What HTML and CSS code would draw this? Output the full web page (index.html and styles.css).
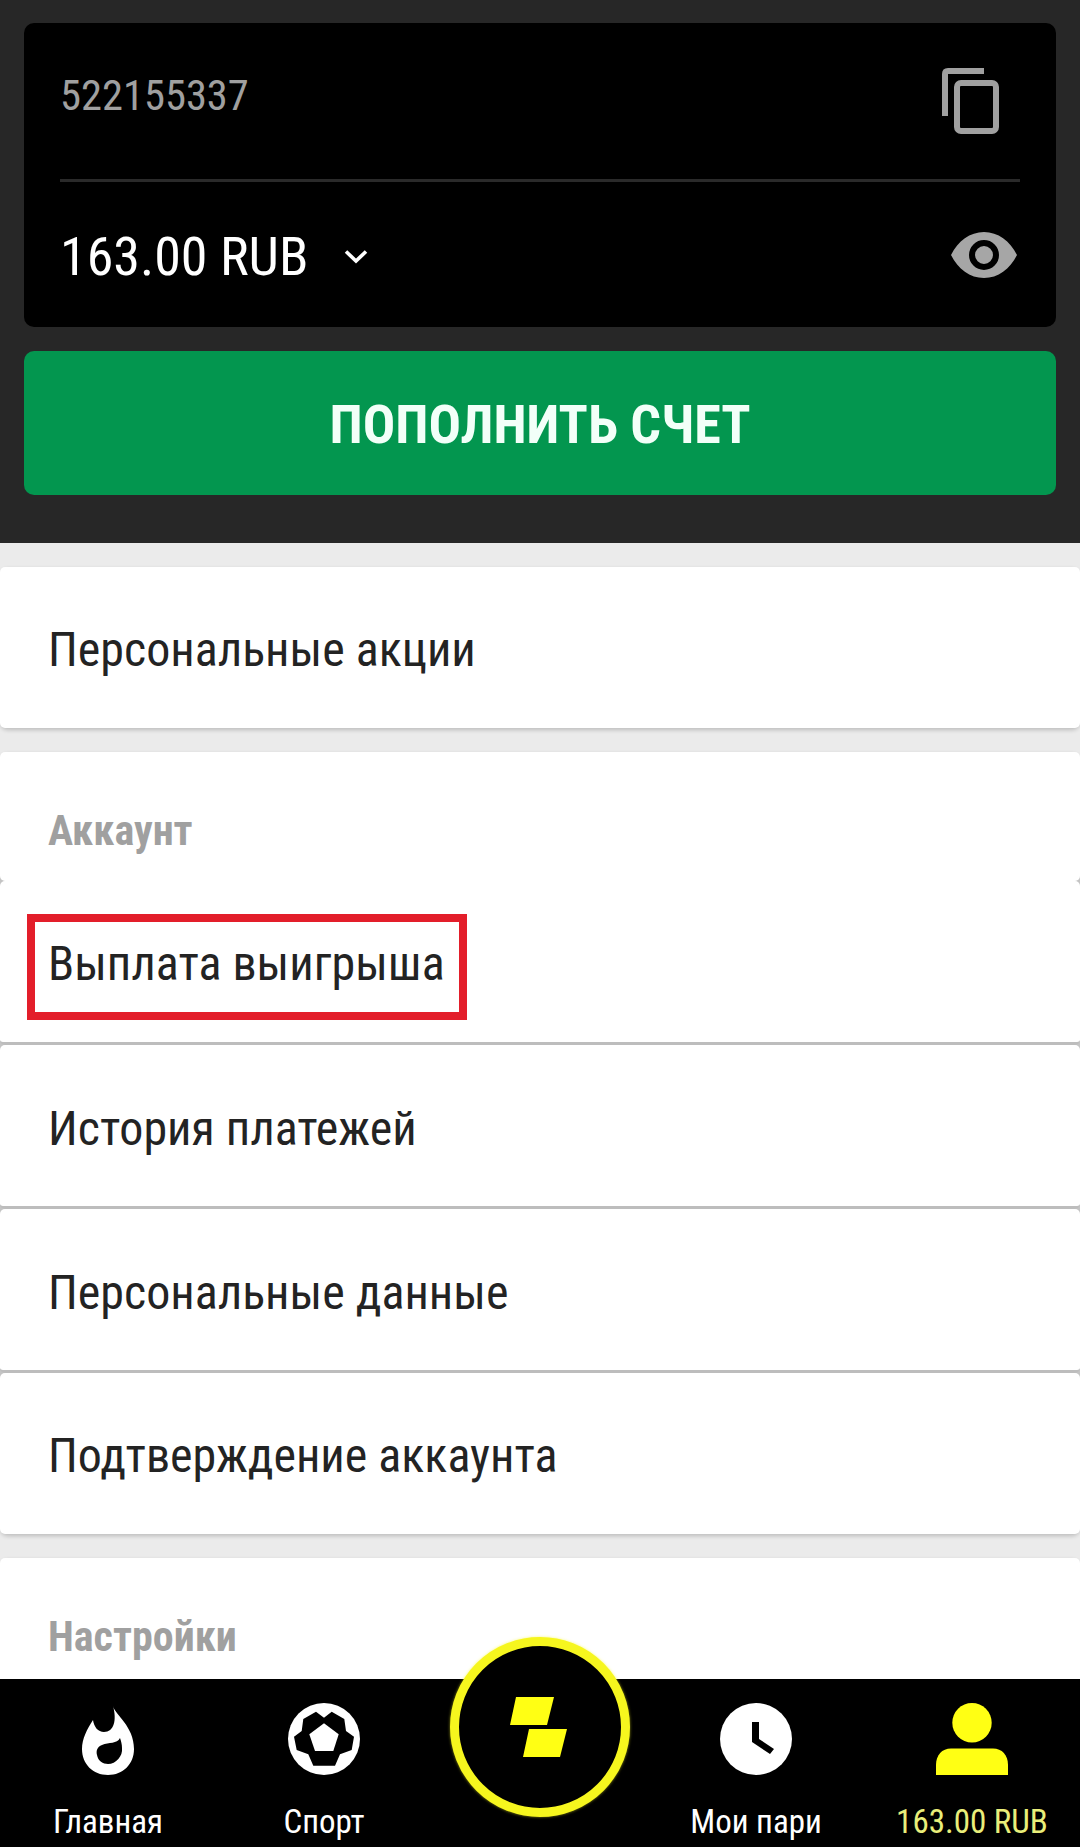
FILE: index.html
```html
<!DOCTYPE html>
<html lang="ru">
<head>
  <meta charset="UTF-8">
  <meta name="viewport" content="width=device-width, initial-scale=1.0"/>
  <title>Профиль</title>
  <link rel="stylesheet" href="styles.css">
</head>
<body>
  <div class="page">
    <header class="top">
      <div class="wallet">
        <div class="wallet-row wallet-id">
          <span class="account-id">522155337</span>
          <svg class="copy-icon" width="57" height="66" viewBox="0 0 57 66">
            <path d="M3 48V6q0-3 3-3h36" fill="none" stroke="#a0a0a0" stroke-width="6"/>
            <rect x="15" y="15" width="39" height="48" rx="4" fill="none" stroke="#a0a0a0" stroke-width="6"/>
          </svg>
        </div>
        <div class="wallet-row wallet-balance">
          <span class="balance">163.00 RUB</span>
          <svg class="chevron" width="26" height="15" viewBox="0 0 26 15">
            <path d="M3 2.500l10 9.500 10-9.500" fill="none" stroke="#fff" stroke-width="3.600"/>
          </svg>
          <svg class="eye-icon" width="66" height="46" viewBox="0 0 66 46">
            <path fill-rule="evenodd" fill="#a6a6a6" d="M0 23C7 9 19 0 33 0s26 9 33 23C59 37 47 46 33 46S7 37 0 23zM33 8a15 15 0 1 0 0 30 15 15 0 0 0 0-30zM33 14a9 9 0 1 1 0 18 9 9 0 0 1 0-18z"/>
          </svg>
        </div>
      </div>
      <button class="deposit">ПОПОЛНИТЬ СЧЕТ</button>
    </header>

    <section class="card">
      <div class="row row-single">Персональные акции</div>
    </section>

    <section class="card">
      <div class="card-title">Аккаунт</div>
      <div class="row row-marked">Выплата выигрыша<span class="mark"></span></div>
      <div class="row">История платежей</div>
      <div class="row">Персональные данные</div>
      <div class="row row-last">Подтверждение аккаунта</div>
    </section>

    <section class="card">
      <div class="card-title">Настройки</div>
    </section>
  </div>

  <nav class="tabbar">
    <a class="tab">
      <svg width="52" height="69" viewBox="0 0 52 69" class="fire-icon">
        <path fill="#fff" fill-rule="evenodd" d="M31 0C33 9 52 20 52 43C52 58 41 69 26 69C11 69 0 58 0 43C0 33 5 23 11 14C12 21 16 26 22 26C32 26 35 14 31 0ZM38 32C35 38 27 36 20 39C15 41 14 45 15 49C16 55 21 58 26 58C34 58 41 50 40 42C40 38 39 35 38 32Z"/>
      </svg>
      <span class="tab-label">Главная</span>
    </a>
    <a class="tab">
      <svg width="72" height="72" viewBox="0 0 72 72">
        <circle cx="36" cy="36" r="36" fill="#fff"/>
        <path d="M36 14.700L43.700 8.700 56.300 16 58 28 66 33.700 63.700 47 52 51.300 47 62.700H25.300L20.300 51.300 8.700 47 6 33.700 13.700 28 15.300 16 28 8.700z" fill="#000"/>
        <path d="M36 20.300L50.700 31.300 45.300 48H27L21.300 31.300z" fill="#fff"/>
      </svg>
      <span class="tab-label">Спорт</span>
    </a>
    <a class="tab tab-main">
      <span class="logo-ring">
        <svg class="logo-mark" width="57" height="60" viewBox="0 0 57 60">
          <path fill="#ffff14" d="M6 0H44L37 28H0zM19 32H57L50 60H13z"/>
        </svg>
      </span>
    </a>
    <a class="tab">
      <svg width="72" height="72" viewBox="0 0 72 72">
        <circle cx="36" cy="36" r="36" fill="#fff"/>
        <path d="M32 19h7v17l15 10-4 5-18-12z" fill="#000"/>
      </svg>
      <span class="tab-label">Мои пари</span>
    </a>
    <a class="tab tab-active">
      <svg width="72" height="72" viewBox="0 0 72 72">
        <circle cx="36" cy="19.700" r="19.700" fill="#ffff14"/>
        <path d="M0 72V62c0-10 6-16.500 15-16.500h42c9 0 15 6.500 15 16.500v10z" fill="#ffff14"/>
      </svg>
      <span class="tab-label">163.00 RUB</span>
    </a>
  </nav>
</body>
</html>
```

FILE: styles.css
```css
* {
  box-sizing: border-box;
  margin: 0;
  padding: 0;
}

body {
  width: 1080px;
  height: 1847px;
  overflow: hidden;
  position: relative;
  background: #ebebeb;
  font-family: Roboto, sans-serif;
  font-stretch: condensed;
  color: #232323;
}

.top {
  height: 543px;
  padding: 23px 24px 0;
  background: #272727;
}

.wallet {
  height: 304px;
  padding: 0 36px;
  background: #000;
  border-radius: 10px;
}

.wallet-row {
  display: flex;
  align-items: center;
}

.wallet-id {
  height: 159px;
  justify-content: space-between;
  border-bottom: 3px solid #2a2a2a;
}

.account-id {
  margin-bottom: 12px;
  font-size: 42.500px;
  color: #a0a0a0;
}

.copy-icon {
  margin-right: 21px;
}

.wallet-balance {
  height: 145px;
}

.balance {
  margin-top: 4px;
  font-size: 54px;
  color: #fff;
}

.chevron {
  margin: 4px 0 0 35px;
}

.eye-icon {
  margin-left: auto;
  margin-right: 3px;
}

.deposit {
  display: block;
  width: 100%;
  height: 144px;
  margin-top: 24px;
  padding-top: 3px;
  border: none;
  border-radius: 10px;
  background: #03964f;
  color: #f2fff8;
  font-family: inherit;
  font-stretch: condensed;
  font-size: 54px;
  font-weight: 700;
}

/* grey card behind the rounded rows gives the small notches at the row ends */
.card {
  margin-top: 24px;
  background: #c4c4c4;
  border-radius: 8px;
  box-shadow: 0 2px 4px rgba(0, 0, 0, 0.2);
}

.row {
  position: relative;
  display: flex;
  align-items: center;
  height: 164px;
  padding: 5px 0 0 48px;
  background: #fff;
  border-radius: 5px;
  font-size: 48px;
  border-bottom: 3px solid #bdbdbd;
}

.card > .row:last-child {
  border-bottom: none;
}

.row-single {
  height: 161px;
  padding-top: 4px;
}

.row-last {
  height: 161px;
  padding-top: 4px;
}

.card-title {
  height: 129px;
  padding: 54px 0 0 48px;
  background: #fff;
  border-radius: 5px;
  font-size: 42px;
  font-weight: 700;
  color: #a0a0a0;
}

.row-marked {
  padding-top: 4px;
}

.mark {
  position: absolute;
  left: 27px;
  top: 33px;
  width: 440px;
  height: 106px;
  border: 8px solid #e31e2a;
}

.tabbar {
  position: absolute;
  left: 0;
  right: 0;
  bottom: 0;
  height: 168px;
  display: grid;
  grid-template-columns: repeat(5, 216px);
  background: #000;
}

.tab {
  display: flex;
  flex-direction: column;
  align-items: center;
  padding-top: 24px;
  font-size: 33px;
  color: #fff;
}

.fire-icon {
  margin: 3px 0 0;
}

.tab-label {
  margin-top: 27px;
}

.tab-active .tab-label {
  color: #e9ee7a;
}

.tab-main {
  position: relative;
}

.logo-ring {
  position: absolute;
  left: 18px;
  top: -42px;
  width: 180px;
  height: 180px;
  display: flex;
  align-items: center;
  justify-content: center;
  background: #000;
  border: 9px solid #f6f61e;
  border-radius: 50%;
  box-shadow: 0 0 3px rgba(246, 246, 30, 0.6);
}

.logo-mark {
  margin-right: 3px;
}
```
